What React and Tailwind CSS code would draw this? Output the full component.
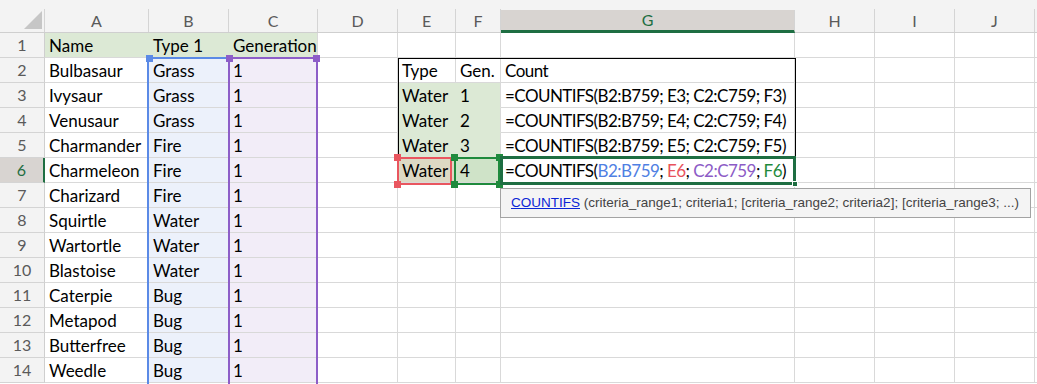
import React from "react";

const COLS = ["A", "B", "C", "D", "E", "F", "G", "H", "I", "J", ""];

const pokemon = [
  ["Name", "Type 1", "Generation"],
  ["Bulbasaur", "Grass", "1"],
  ["Ivysaur", "Grass", "1"],
  ["Venusaur", "Grass", "1"],
  ["Charmander", "Fire", "1"],
  ["Charmeleon", "Fire", "1"],
  ["Charizard", "Fire", "1"],
  ["Squirtle", "Water", "1"],
  ["Wartortle", "Water", "1"],
  ["Blastoise", "Water", "1"],
  ["Caterpie", "Bug", "1"],
  ["Metapod", "Bug", "1"],
  ["Butterfree", "Bug", "1"],
  ["Weedle", "Bug", "1"],
];

// E/F/G table, keyed by row number
const lookup = {
  2: ["Type", "Gen.", "Count"],
  3: ["Water", "1", "=COUNTIFS(B2:B759; E3; C2:C759; F3)"],
  4: ["Water", "2", "=COUNTIFS(B2:B759; E4; C2:C759; F4)"],
  5: ["Water", "3", "=COUNTIFS(B2:B759; E5; C2:C759; F5)"],
};

function Cell({ children, className = "" }) {
  return (
    <div
      className={`h-[25px] border-r border-b border-[#d9d9d9] pl-[4px] leading-[25px] whitespace-nowrap overflow-visible ${className}`}
    >
      {children}
    </div>
  );
}

function ActiveFormula() {
  return (
    <span>
      =COUNTIFS(<span className="text-[#4f80e3]">B2:B759</span>;{" "}
      <span className="text-[#e8525c]">E6</span>;{" "}
      <span className="text-[#8c5bc6]">C2:C759</span>;{" "}
      <span className="text-[#1f8a3d]">F6</span>)
    </span>
  );
}

// little square grips on the corners of a highlighted range
function Handle({ className }) {
  return <div className={`absolute w-[7px] h-[7px] ${className}`} />;
}

export default function App() {
  return (
    <div className="relative w-[1037px] h-[384px] overflow-hidden bg-white text-[17px] text-black font-['Lato',sans-serif]">
      <div className="grid grid-cols-[45px_104px_80px_89px_80px_58px_45px_294px_80px_80px_80px_1fr] grid-rows-[33px_repeat(14,25px)]">
        {/* column headers */}
        <div className="flex items-end bg-[#f3f3f3] border-b border-[#cfcfcf]">
          <div className="h-[23px] w-full border-r border-[#d4d4d4] flex items-start pl-[24px] pt-[2px]">
            <div className="w-0 h-0 border-l-[18px] border-l-transparent border-b-[18px] border-b-[#c6c6c6]" />
          </div>
        </div>
        {COLS.map((c) => (
          <div
            key={c || "end"}
            className={`flex items-end bg-[#f3f3f3] border-b-[#cfcfcf] ${c === "G" ? "" : "border-b"}`}
          >
            <div
              className={`h-[23px] w-full flex items-center justify-center text-[16px] border-r border-[#d4d4d4] ${
                c === "G"
                  ? "bg-[#d8d4d1] text-[#1e6e42] border-b-[3px] border-b-[#1e6e42]"
                  : "text-[#5a5a5a]"
              }`}
            >
              {c}
            </div>
          </div>
        ))}

        {pokemon.map((row, i) => {
          const r = i + 1;
          const t = lookup[r];
          const green = r >= 3 && r <= 5;
          return (
            <React.Fragment key={r}>
              <div
                className={`h-[25px] flex items-center justify-center text-[16px] border-b border-[#d4d4d4] ${
                  r === 6
                    ? "bg-[#d8d4d1] text-[#1e6e42] border-r-[2px] border-r-[#1e6e42]"
                    : "bg-[#f3f3f3] text-[#5a5a5a] border-r border-r-[#cfcfcf]"
                }`}
              >
                {r}
              </div>
              <Cell className={r === 1 ? "bg-[#dce9d5] border-r-[#dce9d5]" : ""}>{row[0]}</Cell>
              <Cell className={r === 1 ? "bg-[#dce9d5] border-r-[#dce9d5]" : "bg-[#ecf1fb]"}>{row[1]}</Cell>
              <Cell className={r === 1 ? "bg-[#dce9d5]" : "bg-[#f2edf8]"}>{row[2]}</Cell>
              <Cell />
              {r === 6 ? (
                <>
                  <Cell className="bg-[#ddd9c4]">Water</Cell>
                  <Cell className="bg-[#cfe3c8]">4</Cell>
                  <Cell className="tracking-[-0.55px]">
                    <ActiveFormula />
                  </Cell>
                </>
              ) : (
                <>
                  <Cell className={green ? "bg-[#dce9d5] border-[#dce9d5]" : ""}>{t ? t[0] : ""}</Cell>
                  <Cell className={green ? "bg-[#dce9d5] border-r-[#d9d9d9] border-b-[#dce9d5]" : ""}>{t ? t[1] : ""}</Cell>
                  <Cell className="tracking-[-0.55px]">{t ? t[2] : ""}</Cell>
                </>
              )}
              <Cell />
              <Cell />
              <Cell />
              <Cell />
            </React.Fragment>
          );
        })}
      </div>

      {/* E2:G6 table outline */}
      <div className="absolute left-[398px] top-[58px] w-[398px] h-[126px] border border-black" />

      {/* B2:B759 range */}
      <div className="absolute left-[147px] top-[57px] w-[83px] h-[400px] border-2 border-[#5b8ae6]">
        <Handle className="-left-[3px] -top-[4px] bg-[#5b8ae6]" />
      </div>

      {/* C2:C759 range */}
      <div className="absolute left-[228px] top-[57px] w-[90px] h-[400px] border-2 border-[#8d5ec8]">
        <Handle className="-left-[4px] -top-[4px] bg-[#8d5ec8]" />
        <Handle className="-right-[4px] -top-[4px] bg-[#8d5ec8]" />
      </div>

      {/* E6 range */}
      <div className="absolute left-[397px] top-[157px] w-[55px] h-[28px] border-2 border-[#e9565f]">
        <Handle className="-left-[5px] -top-[5px] bg-[#e9565f]" />
        <Handle className="-left-[5px] -bottom-[5px] bg-[#e9565f]" />
      </div>

      {/* F6 range */}
      <div className="absolute left-[454px] top-[157px] w-[46px] h-[28px] border-2 border-[#1f8a3d]">
        <Handle className="-left-[5px] -top-[5px] bg-[#1f8a3d]" />
        <Handle className="-right-[5px] -top-[5px] bg-[#1f8a3d]" />
        <Handle className="-left-[5px] -bottom-[5px] bg-[#1f8a3d]" />
        <Handle className="-right-[5px] -bottom-[5px] bg-[#1f8a3d]" />
      </div>

      {/* active cell G6 with fill handle */}
      <div className="absolute left-[500px] top-[156px] w-[296px] h-[29px] border-[3px] border-[#1e6e42]">
        <div className="absolute -right-[5px] -bottom-[5px] w-[6px] h-[6px] bg-[#1e6e42] border border-white" />
      </div>

      {/* function tooltip */}
      <div className="absolute left-[500px] top-[188px] w-[531px] h-[30px] bg-[#f4f4f4] border border-[#a3a3a3] flex items-center pl-[10px] text-[13.5px] text-[#444] font-['Liberation_Sans',sans-serif] whitespace-nowrap">
        <span className="text-[#0b25d6] underline">COUNTIFS</span>
        <span>&nbsp;(criteria_range1; criteria1; [criteria_range2; criteria2]; [criteria_range3; ...)</span>
      </div>
    </div>
  );
}
